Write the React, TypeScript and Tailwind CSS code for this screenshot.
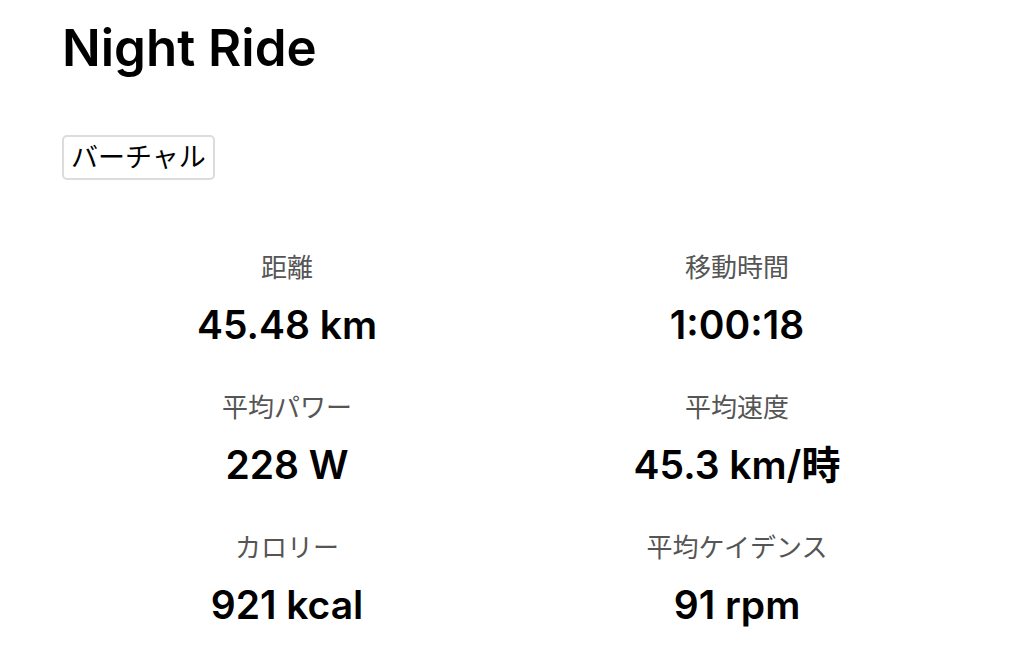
const stats = [
  { label: "距離", value: "45.48 km" },
  { label: "移動時間", value: "1:00:18" },
  { label: "平均パワー", value: "228 W" },
  { label: "平均速度", value: "45.3 km/時" },
  { label: "カロリー", value: "921 kcal" },
  { label: "平均ケイデンス", value: "91 rpm" },
];

const font = "font-['Inter','Noto_Sans_CJK_JP',sans-serif]";

export default function App() {
  return (
    <div className={`${font} bg-white text-black min-h-screen px-[62px] pt-[18px]`}>
      <h1 className="text-[51px] leading-[60px] font-semibold">Night Ride</h1>

      <div className="mt-[57px]">
        <span className="inline-block border-2 border-[#dcdcdc] rounded-[5px] px-[7px] text-[27px] leading-[41px]">
          バーチャル
        </span>
      </div>

      <div className="mt-[70px] grid grid-cols-2 gap-y-[41px] text-center">
        {stats.map((s) => (
          <div key={s.label}>
            <div className="text-[26px] leading-[36px] text-[#555]">{s.label}</div>
            <div className="mt-[15px] text-[39px] leading-[48px] font-semibold">{s.value}</div>
          </div>
        ))}
      </div>
    </div>
  );
}
